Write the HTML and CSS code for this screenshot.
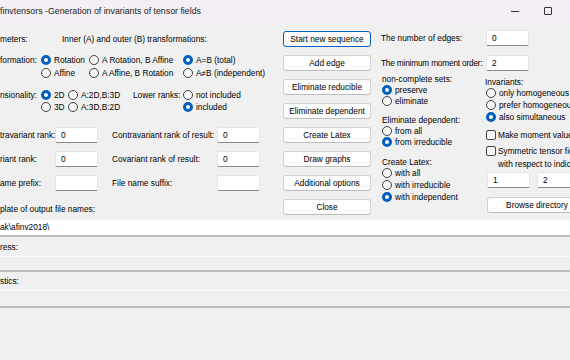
FILE: index.html
```html
<!DOCTYPE html>
<html lang="en">

<head>
    <meta charset="UTF-8">
    <title>finvtensors</title>
    <link rel="stylesheet" href="styles.css">
</head>

<body>
    <div class="window">
        <div class="titlebar">
            <span class="title">finvtensors -Generation of invariants of tensor fields</span>
            <span class="win-min"></span>
            <span class="win-max"></span>
        </div>

        <div class="client">
            <div class="top">
                <div class="params">
                    <div class="row row-head">
                        <span class="cell w62">meters:</span>
                        <span>Inner (A) and outer (B) transformations:</span>
                    </div>

                    <div class="group-trans">
                        <div class="row r13">
                            <span class="cell w41">formation:</span>
                            <span class="radio on w48">Rotation</span>
                            <span class="radio w94">A Rotation, B Affine</span>
                            <span class="radio on">A=B (total)</span>
                        </div>
                        <div class="row r13">
                            <span class="cell w41"></span>
                            <span class="radio w48">Affine</span>
                            <span class="radio w94">A Affine, B Rotation</span>
                            <span class="radio">A≠B (independent)</span>
                        </div>
                    </div>

                    <div class="group-dim">
                        <div class="row r12">
                            <span class="cell w41">nsionality:</span>
                            <span class="radio on w27">2D</span>
                            <span class="radio w65">A:2D,B:3D</span>
                            <span class="cell w50">Lower ranks:</span>
                            <span class="radio">not included</span>
                        </div>
                        <div class="row r12">
                            <span class="cell w41"></span>
                            <span class="radio w27">3D</span>
                            <span class="radio w65">A:3D,B:2D</span>
                            <span class="cell w50"></span>
                            <span class="radio on">included</span>
                        </div>
                    </div>

                    <div class="group-fields">
                        <div class="row field-row">
                            <span class="cell w55">travariant rank:</span>
                            <span class="input">0</span>
                            <span class="cell lbl-result">Contravariant rank of result:</span>
                            <span class="input">0</span>
                        </div>
                        <div class="row field-row">
                            <span class="cell w55">riant rank:</span>
                            <span class="input">0</span>
                            <span class="cell lbl-result">Covariant rank of result:</span>
                            <span class="input">0</span>
                        </div>
                        <div class="row field-row">
                            <span class="cell w55">ame prefix:</span>
                            <span class="input"></span>
                            <span class="cell lbl-result">File name suffix:</span>
                            <span class="input"></span>
                        </div>
                    </div>

                    <div class="row template-label">plate of output file names:</div>
                </div>

                <div class="buttons">
                    <button class="btn focused">Start new sequence</button>
                    <button class="btn">Add edge</button>
                    <button class="btn">Eliminate reducible</button>
                    <button class="btn">Eliminate dependent</button>
                    <button class="btn">Create Latex</button>
                    <button class="btn">Draw graphs</button>
                    <button class="btn">Additional options</button>
                    <button class="btn">Close</button>
                </div>

                <div class="side">
                    <div class="row side-field">
                        <span class="cell w105">The number of edges:</span>
                        <span class="input">0</span>
                    </div>
                    <div class="row side-field second">
                        <span class="cell w105 tight">The minimum moment order:</span>
                        <span class="input">2</span>
                    </div>

                    <div class="side-cols">
                        <div class="side-left">
                            <div class="opt-label">non-complete sets:</div>
                            <div class="radio on opt">preserve</div>
                            <div class="radio opt">eliminate</div>

                            <div class="opt-label gap">Eliminate dependent:</div>
                            <div class="radio opt">from all</div>
                            <div class="radio on opt">from irreducible</div>

                            <div class="opt-label gap latex">Create Latex:</div>
                            <div class="radio opt r12">with all</div>
                            <div class="radio opt r12">with irreducible</div>
                            <div class="radio on opt r12">with independent</div>
                        </div>

                        <div class="side-right">
                            <div class="opt-label inv">Invariants:</div>
                            <div class="radio opt r12">only homogeneous</div>
                            <div class="radio opt r12">prefer homogeneous</div>
                            <div class="radio on opt r12">also simultaneous</div>

                            <div class="check moment">Make moment values</div>
                            <div class="check sym">Symmetric tensor fields</div>
                            <div class="sym-note">with respect to indices</div>

                            <div class="index-row">
                                <span class="input">1</span>
                                <span class="input">2</span>
                            </div>

                            <button class="btn browse">Browse directory</button>
                        </div>
                    </div>
                </div>
            </div>

            <div class="path-band">ak\afinv2018\</div>

            <div class="status progress">
                <div class="status-label">ress:</div>
                <div class="status-bar"></div>
            </div>

            <div class="status stats">
                <div class="status-label">stics:</div>
                <div class="status-bar"></div>
            </div>
        </div>
    </div>
</body>

</html>
```

FILE: styles.css
```css
*,
*::before,
*::after {
    box-sizing: border-box;
}

body {
    margin: 0;
    font-family: "Liberation Sans", Arial, sans-serif;
    font-size: 8.3px;
    color: #000;
    background: #f0f0f0;
    overflow: hidden;
}

.window {
    width: 570px;
    height: 360px;
    overflow: hidden;
    background: #f0f0f0;
}

.titlebar {
    height: 22px;
    display: flex;
    align-items: center;
    background: #f4eff4;
    white-space: nowrap;
}

.title {
    font-size: 8.8px;
    color: #1b1b1b;
}

.win-min {
    margin-left: auto;
    width: 8px;
    height: 1px;
    background: #333;
}

.win-max {
    margin-left: 25px;
    margin-right: 18px;
    width: 8px;
    height: 8px;
    border: 1px solid #333;
    border-radius: 1px;
}

.top {
    display: flex;
    height: 198px;
}

.params {
    width: 283px;
    flex: none;
    padding-top: 10px;
}

.row {
    display: flex;
    align-items: center;
    white-space: nowrap;
}

.row-head {
    height: 14px;
}

.cell {
    flex: none;
    white-space: nowrap;
}

.tight {
    letter-spacing: -0.2px;
}

.w27 { width: 27px; }
.w41 { width: 41px; }
.w48 { width: 48px; }
.w50 { width: 50px; }
.w55 { width: 55px; }
.w62 { width: 62px; }
.w65 { width: 65px; }
.w94 { width: 94px; }
.w105 { width: 105px; }

.r13 { height: 13px; }
.r12 { height: 12px; }

.group-trans {
    margin-top: 7px;
}

.group-dim {
    margin-top: 10px;
}

.group-fields {
    margin-top: 14px;
    display: flex;
    flex-direction: column;
    gap: 8px;
}

.field-row {
    height: 16px;
}

.lbl-result {
    width: 105px;
    margin-left: 14px;
}

.template-label {
    margin-top: 11px;
    height: 14px;
}

/* radios and checks */
.radio {
    display: inline-flex;
    align-items: center;
    gap: 3px;
    flex: none;
    white-space: nowrap;
}

.radio::before {
    content: "";
    flex: none;
    width: 10px;
    height: 10px;
    border: 1px solid #404040;
    border-radius: 50%;
    background: #f7f7f7;
}

.radio.on::before {
    border: 3px solid #005fb8;
    background: #fff;
}

.check {
    display: flex;
    align-items: center;
    gap: 2px;
    height: 12px;
    margin-left: 1px;
    white-space: nowrap;
}

.check::before {
    content: "";
    flex: none;
    width: 10px;
    height: 10px;
    border: 1px solid #444;
    border-radius: 2px;
    background: #f7f7f7;
}

/* inputs */
.input {
    flex: none;
    display: flex;
    align-items: center;
    width: 43px;
    height: 16px;
    padding-left: 5px;
    background: #fff;
    border: 1px solid #e4e4e4;
    border-bottom-color: #8a8a8a;
    border-radius: 2px;
}

/* buttons */
.buttons {
    width: 98px;
    flex: none;
    padding-top: 9px;
    display: flex;
    flex-direction: column;
    gap: 8px;
}

.btn {
    width: 88px;
    height: 16px;
    padding: 0;
    font: inherit;
    color: #000;
    background: #fdfdfd;
    border: 1px solid #d2d2d2;
    border-bottom-color: #bdbdbd;
    border-radius: 3px;
    white-space: nowrap;
}

.btn.focused {
    border-color: #005fb8;
}

/* right side */
.side {
    flex: 1;
    padding-top: 8px;
}

.side-field {
    height: 16px;
}

.side-field.second {
    margin-top: 9px;
}

.side-cols {
    display: flex;
}

.side-left {
    width: 104px;
    flex: none;
    padding-left: 1px;
}

.side-right {
    flex: 1;
}

.opt-label {
    height: 10px;
    margin-top: 3px;
    display: flex;
    align-items: center;
    white-space: nowrap;
}

.opt-label.gap {
    margin-top: 9px;
}

.opt-label.latex {
    height: 11px;
}

.opt-label.inv {
    height: 11px;
    margin-top: 5px;
}

.opt {
    display: flex;
    height: 11px;
}

.opt.r12 {
    height: 12px;
}

.side-right .radio {
    margin-left: 1px;
}

.check.moment {
    margin-top: 6px;
}

.check.sym {
    margin-top: 4px;
}

.sym-note {
    margin-top: 1px;
    height: 12px;
    padding-left: 13px;
    display: flex;
    align-items: center;
    white-space: nowrap;
}

.index-row {
    margin-top: 2px;
    padding-left: 2px;
    display: flex;
    gap: 7px;
}

.browse {
    margin-top: 9px;
    margin-left: 2px;
    width: 100px;
}

/* bottom bands */
.path-band {
    height: 17px;
    padding-bottom: 2px;
    display: flex;
    align-items: center;
    background: #fff;
    border-bottom: 2px solid #bdbdbd;
}

.status {
    border-bottom: 2px solid #bdbdbd;
}

.status-label {
    height: 19px;
    display: flex;
    align-items: center;
}

.stats .status-label {
    height: 18px;
}

.status-bar {
    height: 14px;
    border-top: 1px solid #fbfbfb;
}

.stats .status-bar {
    height: 16px;
}
```
